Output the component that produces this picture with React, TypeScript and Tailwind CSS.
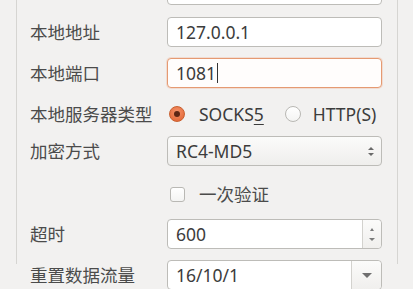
import React from 'react';

const font = { fontFamily: '"Noto Sans", "Noto Sans CJK SC", sans-serif' };

function Label({ children }: { children: React.ReactNode }) {
  return <div className="flex items-center text-[17.5px] text-[#4b4b4b] whitespace-nowrap">{children}</div>;
}

function Field({ value, focused, caret }: { value: string; focused?: boolean; caret?: boolean }) {
  return (
    <div
      className={`flex h-[30px] items-center rounded-[4px] border px-[8px] text-[17.5px] text-[#3c3c3c] ${
        focused
          ? 'border-[#e59a72] bg-[#fffdfc] shadow-[0_0_0_1px_rgba(240,160,120,0.25)]'
          : 'border-[#bdbcb8] bg-white'
      }`}
    >
      <span>{value}</span>
      {caret && <span className="ml-[1px] h-[20px] w-[1px] bg-[#333]" />}
    </div>
  );
}

function Radio({ checked }: { checked?: boolean }) {
  return checked ? (
    <span className="flex h-[16px] w-[16px] shrink-0 items-center justify-center rounded-full border border-[#c9602f] bg-[radial-gradient(circle_at_50%_35%,#f5936a,#e0602f)]">
      <span className="block h-[6px] w-[6px] rounded-full bg-[#5e2614]" />
    </span>
  ) : (
    <span className="block h-[16px] w-[16px] shrink-0 rounded-full border border-[#b9b8b4] bg-[linear-gradient(#ffffff,#f4f4f3)]" />
  );
}

export default function App() {
  return (
    <div className="h-[289px] w-[413px] overflow-hidden bg-[#f2f1f0]" style={font}>
      <div className="ml-[16px] h-full w-[382px] border-x border-[#d6d5d2]">
        <div className="-mt-[25px] grid grid-cols-[137px_215px] pl-[13px]">
          <Label>密码</Label>
          <Field value="" />

          <div className="col-span-2 h-[12px]" />
          <Label>本地地址</Label>
          <Field value="127.0.0.1" />

          <div className="col-span-2 h-[11px]" />
          <Label>本地端口</Label>
          <Field value="1081" focused caret />

          <div className="col-span-2 flex h-[48px] items-center pt-[4px]">
            <span className="w-[137px] shrink-0 text-[17.5px] text-[#4b4b4b] whitespace-nowrap">本地服务器类型</span>
            <div className="flex items-center text-[17.5px] text-[#3c3c3c]">
              <span className="ml-[2px] flex"><Radio checked /></span>
              <span className="ml-[14px]">
                SOCKS<span className="underline underline-offset-[3px]">5</span>
              </span>
              <span className="ml-[21px] flex"><Radio /></span>
              <span className="ml-[12px]">HTTP(S)</span>
            </div>
          </div>

          <Label>加密方式</Label>
          <div className="flex h-[30px] items-center justify-between rounded-[4px] border border-[#bdbcb8] bg-[linear-gradient(#fbfbfa,#efeeec)] pl-[8px] pr-[7px] text-[17.5px] text-[#3c3c3c]">
            <span>RC4-MD5</span>
            <span className="flex flex-col items-center gap-[3px]">
              <span className="block h-0 w-0 border-x-[3px] border-b-[3px] border-x-transparent border-b-[#6a6a6a]" />
              <span className="block h-0 w-0 border-x-[3px] border-t-[3px] border-x-transparent border-t-[#6a6a6a]" />
            </span>
          </div>

          <div className="col-span-2 flex h-[53px] items-center pl-[140px] pt-[4px]">
            <span className="block h-[15px] w-[15px] shrink-0 rounded-[3px] border border-[#b9b8b4] bg-[linear-gradient(#ffffff,#f4f4f3)]" />
            <span className="ml-[14px] text-[17.5px] text-[#4b4b4b]">一次验证</span>
          </div>

          <Label>超时</Label>
          <div className="flex h-[30px] items-stretch rounded-[4px] border border-[#bdbcb8] bg-white text-[17.5px] text-[#3c3c3c]">
            <span className="flex flex-1 items-center px-[8px]">600</span>
            <span className="flex w-[19px] flex-col items-center justify-center gap-[7px] rounded-r-[4px] border-l border-[#d3d2ce] bg-[linear-gradient(#fbfbfa,#f0efed)]">
              <span className="block h-0 w-0 border-x-[2.5px] border-b-[3px] border-x-transparent border-b-[#7a7a7a]" />
              <span className="block h-0 w-0 border-x-[3px] border-t-[3px] border-x-transparent border-t-[#7a7a7a]" />
            </span>
          </div>

          <div className="col-span-2 h-[11px]" />
          <Label>重置数据流量</Label>
          <div className="flex h-[30px] items-stretch rounded-[4px] border border-[#bdbcb8] bg-white text-[17.5px] text-[#3c3c3c]">
            <span className="flex flex-1 items-center px-[8px]">16/10/1</span>
            <span className="flex w-[30px] items-center justify-center rounded-r-[4px] border-l border-[#d3d2ce] bg-[linear-gradient(#fbfbfa,#f0efed)]">
              <span className="block h-0 w-0 border-x-[5px] border-t-[5px] border-x-transparent border-t-[#6f6f6f]" />
            </span>
          </div>
        </div>
      </div>
    </div>
  );
}
